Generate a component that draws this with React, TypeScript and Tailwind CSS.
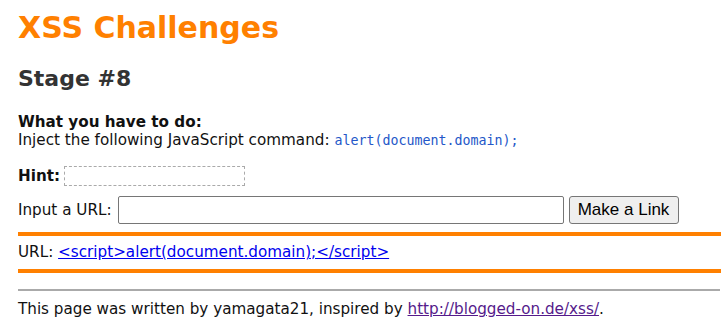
import * as React from "react"

export default function App() {
  return (
    <div className="min-h-[330px] bg-white pl-[18px] pt-[10px] text-[15.2px] leading-[18px] text-[#111] [font-family:'DejaVu_Sans',Verdana,sans-serif]">
      <h1 className="text-[30px] leading-[36px] font-bold text-[#ff8000]">XSS Challenges</h1>
      <h2 className="mt-[20px] text-[22px] leading-[26px] font-bold text-[#333]">Stage #8</h2>

      <div className="mt-[21px]">
        <div className="font-bold">What you have to do:</div>
        <div>
          Inject the following JavaScript command:{" "}
          <span className="text-[13.3px] text-[#2457c8] [font-family:'DejaVu_Sans_Mono',monospace]">alert(document.domain);</span>
        </div>
      </div>

      <div className="mt-[16px] flex items-center gap-[4px]">
        <span className="font-bold">Hint:</span>
        <span className="h-[20px] w-[181px] border border-dashed border-[#aaa]" />
      </div>

      <form className="mt-[10px] flex items-center" onSubmit={(e) => e.preventDefault()}>
        <label>Input a URL:</label>
        <input className="ml-[6px] h-[28px] w-[446px] rounded-[2px] border border-[#767676] bg-white px-1 outline-none" />
        <button className="ml-[5px] h-[28px] w-[110px] rounded-[3px] border border-[#767676] bg-[#efefef] text-[17px] text-black [font-family:'Liberation_Sans',Arial,sans-serif]">
          Make a Link
        </button>
      </form>

      <div className="mt-[8px] border-y-[4px] border-[#ff8000] py-[7px] leading-[19px]">
        URL:{" "}
        <a href="#" className="text-[#0000ee] underline">
          &lt;script&gt;alert(document.domain);&lt;/script&gt;
        </a>
      </div>

      <hr className="mt-[16px] mr-[1px] border-t-2 border-[#aaa]" />
      <p className="mt-[9px]">
        This page was written by yamagata21, inspired by{" "}
        <a href="#" className="text-[#551a8b] underline">http://blogged-on.de/xss/</a>.
      </p>
    </div>
  )
}
